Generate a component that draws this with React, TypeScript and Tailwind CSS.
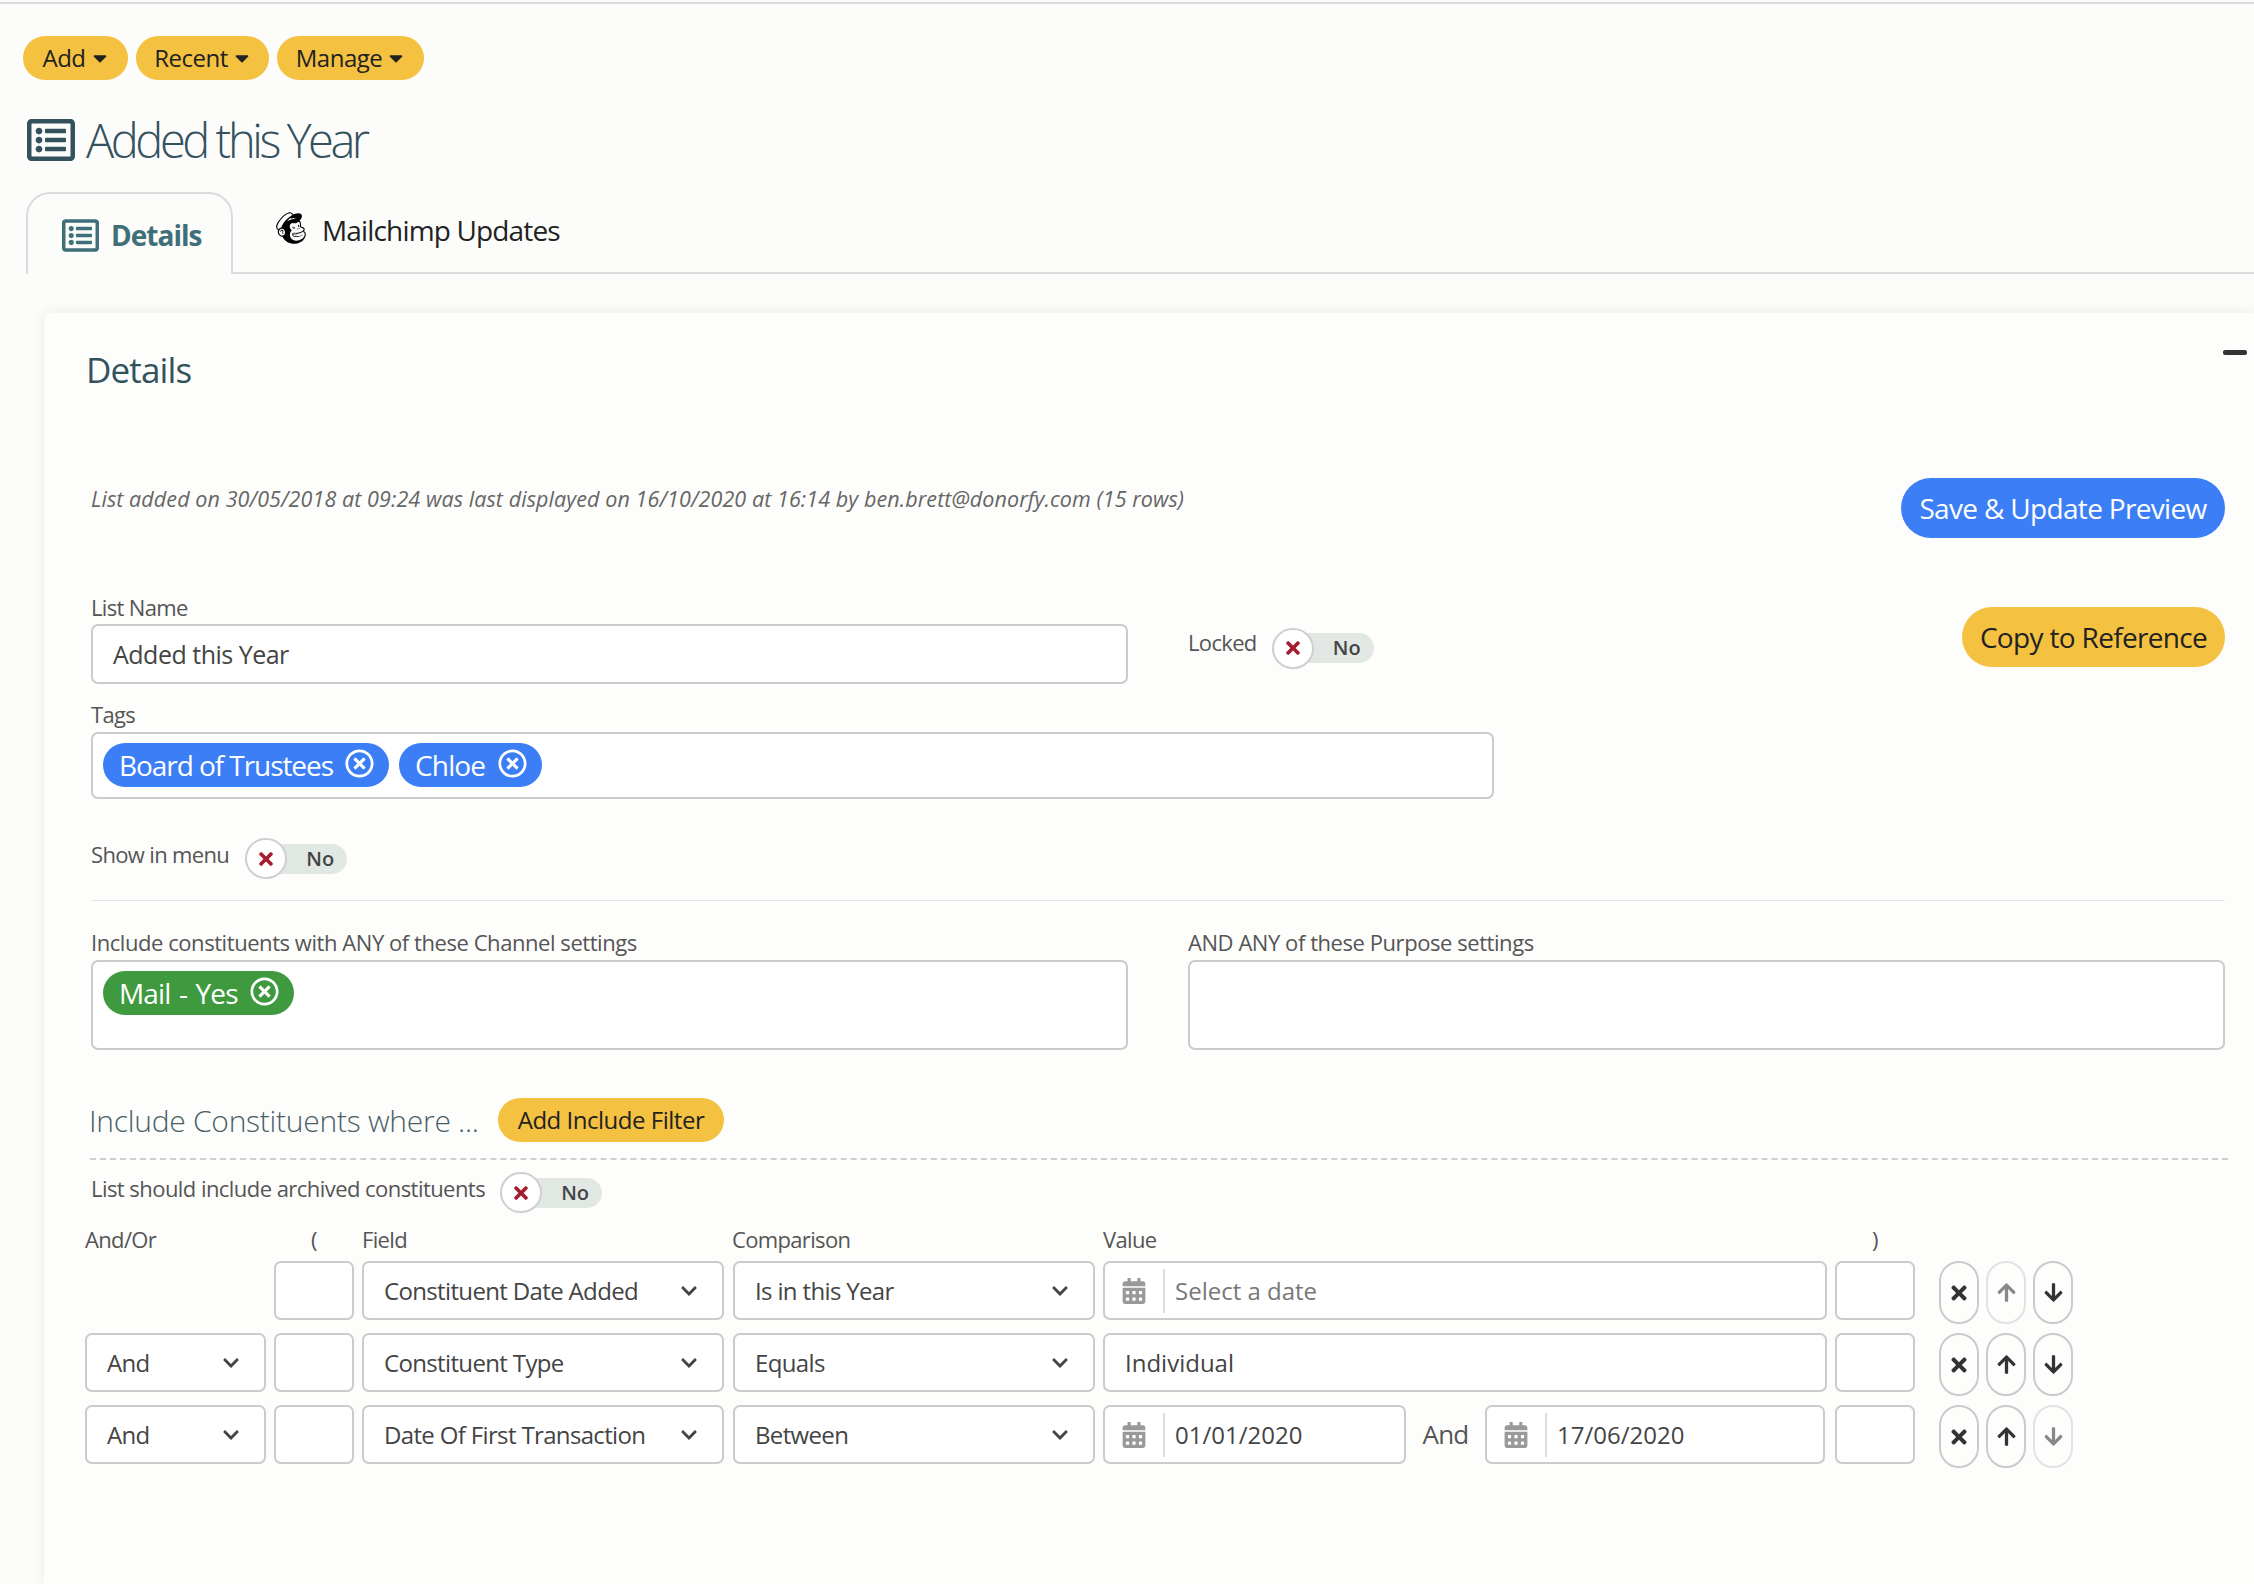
import React from "react";
import {
  FaRegListAlt, FaMailchimp, FaCaretDown, FaRegTimesCircle, FaTimes, FaChevronDown,
  FaCalendarAlt, FaArrowUp, FaArrowDown,
} from "react-icons/fa";

const Pill = ({ children, blue, cls = "" }: { children: React.ReactNode; blue?: boolean; cls?: string }) => (
  <button className={`flex items-center justify-center rounded-full ${blue ? "bg-[#3b7ef6] text-white" : "bg-[#f4c141] text-[#222]"} ${cls}`}>
    {children}
  </button>
);

const Toggle = ({ cls = "" }: { cls?: string }) => (
  <div className={`relative flex h-[41px] w-[102px] shrink-0 items-center ${cls}`}>
    <div className="flex h-[30px] w-full items-center justify-end rounded-full bg-[#e1e8e4] pr-[13px] text-[20px] font-semibold text-[#444]">No</div>
    <div className="absolute left-0 top-0 flex h-[41px] w-[42px] items-center justify-center rounded-full border-2 border-[#cfcfcf] bg-white text-[#a51c30]">
      <FaTimes size={20} />
    </div>
  </div>
);

const Chip = ({ label, green, w, text = "tracking-[-0.03em]" }: { label: string; green?: boolean; w: string; text?: string }) => (
  <div className={`flex h-[44px] items-center justify-between rounded-full pl-[16px] pr-[15px] text-[28px] text-white ${green ? "bg-[#3f9a3f]" : "bg-[#3b7ef6]"} ${text} ${w}`}>
    <span>{label}</span>
    <FaRegTimesCircle size={29} className="-mt-[3px]" />
  </div>
);

const Box = ({ children, cls = "" }: { children?: React.ReactNode; cls?: string }) => (
  <div className={`flex h-[59px] shrink-0 items-center rounded-[7px] border-2 border-[#cbcbcb] bg-white text-[24px] text-[#444] ${cls}`}>
    {children}
  </div>
);

const Select = ({ label, w }: { label: string; w: string }) => (
  <Box cls={`${w} justify-between pl-[20px] pr-[24px] tracking-[-0.027em]`}>
    <span>{label}</span>
    <FaChevronDown size={18} className="text-[#444]" />
  </Box>
);

const DateBox = ({ value, w, placeholder }: { value: string; w: string; placeholder?: boolean }) => (
  <Box cls={w}>
    <div className="flex h-[44px] w-[60px] shrink-0 items-center justify-center border-r-2 border-[#dcdcdc] text-[#999]">
      <FaCalendarAlt size={26} />
    </div>
    <span className={`pl-[10px] tracking-[0em] ${placeholder ? "text-[#777]" : ""}`}>{value}</span>
  </Box>
);

const RoundBtn = ({ children, faded }: { children: React.ReactNode; faded?: boolean }) => (
  <button className={`flex h-[63px] w-[40px] shrink-0 items-center justify-center rounded-full border-2 ${faded ? "border-[#e2e2e2] text-[#888]" : "border-[#cbcbcb] text-[#333]"}`}>
    {children}
  </button>
);

const Actions = ({ upFaded, downFaded }: { upFaded?: boolean; downFaded?: boolean }) => (
  <div className="ml-[16px] flex gap-[7px]">
    <RoundBtn><FaTimes size={22} /></RoundBtn>
    <RoundBtn faded={upFaded}><FaArrowUp size={21} /></RoundBtn>
    <RoundBtn faded={downFaded}><FaArrowDown size={21} /></RoundBtn>
  </div>
);

const Head = ({ children, w }: { children?: React.ReactNode; w: string }) => <div className={`shrink-0 ${w}`}>{children}</div>;

export default function App() {
  return (
    <div
      className="flex h-[1584px] w-[2254px] flex-col overflow-hidden bg-[#fcfcfa] text-[#444]"
      style={{ fontFamily: '"Open Sans", "Noto Sans", sans-serif' }}
    >
      <div className="mt-[2px] h-[2px] shrink-0 bg-[#d9d9d9]" />

      <div className="ml-[23px] mt-[32px] flex shrink-0 gap-[8px] text-[24px] leading-[32px] tracking-[-0.02em]">
        <Pill cls="h-[44px] w-[105px] gap-[3px] pl-[2px]">Add <FaCaretDown size={22} /></Pill>
        <Pill cls="h-[44px] w-[133px] gap-[3px] pl-[2px]">Recent <FaCaretDown size={22} /></Pill>
        <Pill cls="h-[44px] w-[147px] gap-[3px] pl-[2px]">Manage <FaCaretDown size={22} /></Pill>
      </div>

      <div className="ml-[27px] mt-[30px] flex h-[60px] shrink-0 items-center gap-[11px] text-[#34515e]">
        <FaRegListAlt size={48} />
        <h1 className="text-[47px] font-light tracking-[-0.073em]">Added this Year</h1>
      </div>

      <div className="ml-[26px] mt-[22px] flex h-[82px] shrink-0 border-b-2 border-[#dcdcdc]">
        <div className="-mb-[2px] flex h-[82px] w-[207px] items-center gap-[12px] rounded-t-[24px] border-2 border-b-0 border-[#dcdcdc] bg-[#fcfcfa] pl-[34px] pt-[2px] text-[#3f6f78]">
          <FaRegListAlt size={37} />
          <span className="text-[28px] font-bold tracking-[-0.035em]">Details</span>
        </div>
        <div className="ml-[40px] flex h-[76px] items-center gap-[13px] text-[#222]">
          <FaMailchimp size={36} className="-mt-[4px] text-black" />
          <span className="text-[28px] tracking-[-0.03em]">Mailchimp Updates</span>
        </div>
      </div>

      <div className="ml-[44px] mt-[39px] flex-1 rounded-tl-[8px] bg-[#fdfdfb] pl-[47px] pr-[29px] shadow-[0_0_14px_rgba(0,0,0,0.08)]">
        <div className="-ml-[5px] -mr-[22px] mt-[32px] flex h-[50px] items-start justify-between text-[#34515e]">
          <h2 className="text-[35px] leading-[50px] tracking-[-0.025em]">Details</h2>
          <div className="mt-[5px] h-[5px] w-[24px] rounded-[2px] bg-[#333]" />
        </div>

        <div className="mt-[83px] flex items-start justify-between">
          <p className="text-[21.5px] italic leading-[42px] tracking-[0.004em] text-[#666]">
            List added on 30/05/2018 at 09:24 was last displayed on 16/10/2020 at 16:14 by ben.brett@donorfy.com (15 rows)
          </p>
          <Pill blue cls="h-[60px] w-[324px] text-[28px] tracking-[-0.024em]">Save &amp; Update Preview</Pill>
        </div>

        <div className="mt-[58px] flex items-start">
          <div className="w-[1037px] shrink-0">
            <div className="mb-[4px] h-[24px] text-[22px] leading-[22px] tracking-[-0.03em] text-[#555]">List Name</div>
            <Box cls="h-[60px] w-full pl-[20px] pt-[2px] text-[25px] tracking-[-0.02em]">Added this Year</Box>
          </div>
          <div className="ml-[60px] mt-[30px] flex items-center gap-[15px]">
            <span className="mb-[11px] text-[22px] tracking-[-0.03em] text-[#555]">Locked</span>
            <Toggle />
          </div>
          <Pill cls="ml-auto mt-[11px] h-[60px] w-[263px] text-[28px] tracking-[-0.024em]">Copy to Reference</Pill>
        </div>

        <div className="mt-[18px] h-[24px] text-[22px] leading-[24px] tracking-[-0.03em] text-[#555]">Tags</div>
        <div className="mt-[6px] flex h-[67px] w-[1403px] items-start gap-[10px] rounded-[7px] border-2 border-[#cbcbcb] bg-white pl-[10px] pt-[9px]">
          <Chip label="Board of Trustees" w="w-[286px]" text="tracking-[-0.038em]" />
          <Chip label="Chloe" w="w-[143px]" />
        </div>

        <div className="mt-[39px] flex h-[41px] items-center gap-[16px]">
          <span className="mb-[9px] text-[22px] tracking-[-0.03em] text-[#555]">Show in menu</span>
          <Toggle />
        </div>

        <div className="mt-[21px] h-px bg-[#e6e6e6]" />

        <div className="mt-[30px] flex gap-[60px]">
          <div className="w-[1037px] shrink-0">
            <div className="mb-[5px] h-[24px] text-[22px] leading-[22px] tracking-[-0.02em] text-[#555]">Include constituents with ANY of these Channel settings</div>
            <div className="h-[90px] rounded-[7px] border-2 border-[#cbcbcb] bg-white pl-[10px] pt-[9px]">
              <Chip label="Mail - Yes" green w="w-[191px]" text="tracking-[-0.03em] [word-spacing:2px]" />
            </div>
          </div>
          <div className="flex-1">
            <div className="mb-[5px] h-[24px] text-[22px] leading-[22px] tracking-[-0.02em] text-[#555]">AND ANY of these Purpose settings</div>
            <div className="h-[90px] rounded-[7px] border-2 border-[#cbcbcb] bg-white" />
          </div>
        </div>

        <div className="-ml-[2px] mt-[48px] flex h-[44px] items-center">
          <h3 className="w-[409px] text-[30px] font-light tracking-[-0.009em] text-[#4a5f68]">Include Constituents where ...</h3>
          <Pill cls="h-[44px] w-[226px] text-[24px] tracking-[-0.02em]">Add Include Filter</Pill>
        </div>

        <div className="-ml-[1px] -mr-[3px] mt-[16px] border-t-2 border-dashed border-[#cfcfcf]" />

        <div className="mt-[12px] flex h-[41px] items-center">
          <span className="mb-[9px] w-[409px] text-[22px] tracking-[-0.025em] text-[#555]">List should include archived constituents</span>
          <Toggle />
        </div>

        <div className="-ml-[6px] mt-[14px] flex h-[24px] text-[22px] leading-[24px] tracking-[-0.03em] text-[#555]">
          <Head w="w-[226px]">And/Or</Head>
          <Head w="w-[51px]">(</Head>
          <Head w="w-[370px]">Field</Head>
          <Head w="w-[371px]">Comparison</Head>
          <Head w="w-[769px]">Value</Head>
          <Head w="w-[20px]">)</Head>
        </div>

        <div className="-ml-[6px] mt-[10px] flex flex-col gap-[13px]">
          <div className="flex h-[59px] items-start gap-[8px]">
            <div className="w-[181px] shrink-0" />
            <Box cls="w-[80px]" />
            <Select label="Constituent Date Added" w="w-[362px]" />
            <Select label="Is in this Year" w="ml-[1px] w-[362px]" />
            <DateBox value="Select a date" w="w-[724px]" placeholder />
            <Box cls="w-[80px]" />
            <Actions upFaded />
          </div>
          <div className="flex h-[59px] items-start gap-[8px]">
            <Select label="And" w="w-[181px]" />
            <Box cls="w-[80px]" />
            <Select label="Constituent Type" w="w-[362px]" />
            <Select label="Equals" w="ml-[1px] w-[362px]" />
            <Box cls="w-[724px] pl-[20px]">Individual</Box>
            <Box cls="w-[80px]" />
            <Actions />
          </div>
          <div className="flex h-[59px] items-start gap-[8px]">
            <Select label="And" w="w-[181px]" />
            <Box cls="w-[80px]" />
            <Select label="Date Of First Transaction" w="w-[362px]" />
            <Select label="Between" w="ml-[1px] w-[362px]" />
            <DateBox value="01/01/2020" w="w-[303px]" />
            <span className="flex h-[59px] w-[63px] shrink-0 items-center justify-center text-[26px] tracking-[-0.03em] text-[#555]">And</span>
            <DateBox value="17/06/2020" w="w-[340px]" />
            <Box cls="ml-[2px] w-[80px]" />
            <Actions downFaded />
          </div>
        </div>
      </div>
    </div>
  );
}
